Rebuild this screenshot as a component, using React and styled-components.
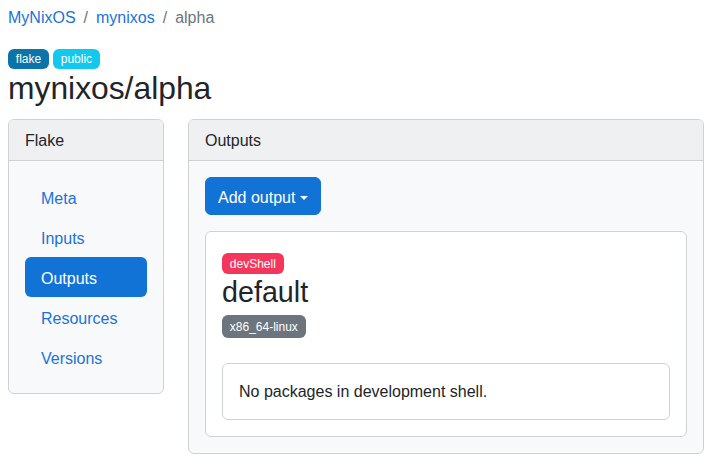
import React from "react";
import styled, { createGlobalStyle } from "styled-components";

const Global = createGlobalStyle`
  html, body { margin: 0; padding: 0; background: #fff; }
  body {
    font-family: "Liberation Sans", Arial, sans-serif;
    font-size: 16px;
    line-height: 1.5;
    color: #212529;
  }
  * { box-sizing: border-box; }
`;

const Page = styled.div`
  padding: 6px 11px 0 8px;
`;

const Breadcrumb = styled.nav`
  display: flex;
  align-items: center;
  gap: 8px;
  height: 24px;
`;

const Crumb = styled.a`
  color: ${(p) => (p.$active ? "#6c757d" : "#1a73d9")};
  text-decoration: none;
`;

const Sep = styled.span`
  color: #6c757d;
`;

const BadgeRow = styled.div`
  display: flex;
  gap: 4px;
  margin-top: 19px;
`;

const Badge = styled.span`
  display: inline-block;
  font-size: 12px;
  line-height: 1;
  padding: ${(p) => p.$pad || "4.2px 7.8px"};
  border-radius: 6px;
  color: #fff;
  background: ${(p) => p.$bg};
`;

const Title = styled.h1`
  margin: 0 0 11.7px;
  padding-top: 1px;
  font-size: 31.8px;
  font-weight: 400;
  line-height: 37px;
`;

const Layout = styled.div`
  display: grid;
  grid-template-columns: 156px 1fr;
  gap: 24px;
  align-items: start;
`;

const Card = styled.div`
  border: 1px solid #cfd2d5;
  border-radius: 6px;
  background: ${(p) => p.$bg || "#f8f9fa"};
  overflow: hidden;
`;

const CardHeader = styled.div`
  background: #eff0f2;
  border-bottom: 1px solid #cfd2d5;
  padding: 9px 16px 7px;
  height: 41px;
`;

const CardBody = styled.div`
  padding: 16px;
`;

const NavList = styled.div`
  display: flex;
  flex-direction: column;
`;

const NavItem = styled.a`
  display: block;
  padding: 10px 16px 6px;
  border-radius: 6px;
  color: ${(p) => (p.$active ? "#fff" : "#1a73d9")};
  background: ${(p) => (p.$active ? "#1273d7" : "transparent")};
  text-decoration: none;
`;

const Button = styled.button`
  display: inline-flex;
  align-items: center;
  gap: 5px;
  font: inherit;
  font-family: "Liberation Sans", Arial, sans-serif;
  color: #fff;
  background: #1273d7;
  border: 1px solid #1273d7;
  border-radius: 6px;
  padding: 8px 12px 4px;
  height: 38px;
`;

const Caret = styled.span`
  width: 0;
  height: 0;
  border-left: 4px solid transparent;
  border-right: 4px solid transparent;
  border-top: 4px solid #fff;
  margin-top: -1px;
`;

const InnerCard = styled(Card)`
  margin-top: 16px;
  background: #fff;
`;

const BadgeLine = styled.div`
  display: flex;
  align-items: flex-end;
  height: ${(p) => p.$h || "auto"};
  margin-top: ${(p) => p.$mt || "0"};
`;

const OutputName = styled.h2`
  margin: 0;
  padding-top: 1px;
  font-size: 28.7px;
  font-weight: 400;
  line-height: 34px;
`;

const Nested = styled(Card)`
  margin-top: 25px;
  background: #fff;
`;

const NestedBody = styled.div`
  padding: 16px 16px 15px;
`;

export default function App() {
  return (
    <>
      <Global />
      <Page>
        <Breadcrumb>
          <Crumb href="#">MyNixOS</Crumb>
          <Sep>/</Sep>
          <Crumb href="#">mynixos</Crumb>
          <Sep>/</Sep>
          <Crumb $active>alpha</Crumb>
        </Breadcrumb>
        <BadgeRow>
          <Badge $bg="#0b74a9">flake</Badge>
          <Badge $bg="#13c8ee">public</Badge>
        </BadgeRow>
        <Title>mynixos/alpha</Title>
        <Layout>
          <Card>
            <CardHeader>Flake</CardHeader>
            <CardBody>
              <NavList>
                <NavItem href="#">Meta</NavItem>
                <NavItem href="#">Inputs</NavItem>
                <NavItem href="#" $active>Outputs</NavItem>
                <NavItem href="#">Resources</NavItem>
                <NavItem href="#">Versions</NavItem>
              </NavList>
            </CardBody>
          </Card>
          <Card>
            <CardHeader>Outputs</CardHeader>
            <CardBody>
              <Button>
                Add output <Caret />
              </Button>
              <InnerCard>
                <CardBody>
                  <BadgeLine $h="26px">
                    <Badge $bg="#f5365c" $pad="5px 7.8px 4px">devShell</Badge>
                  </BadgeLine>
                  <OutputName>default</OutputName>
                  <BadgeLine $mt="6px">
                    <Badge $bg="#6c757d" $pad="6px 7.8px 5px">x86_64-linux</Badge>
                  </BadgeLine>
                  <Nested>
                    <NestedBody>No packages in development shell.</NestedBody>
                  </Nested>
                </CardBody>
              </InnerCard>
            </CardBody>
          </Card>
        </Layout>
      </Page>
    </>
  );
}
